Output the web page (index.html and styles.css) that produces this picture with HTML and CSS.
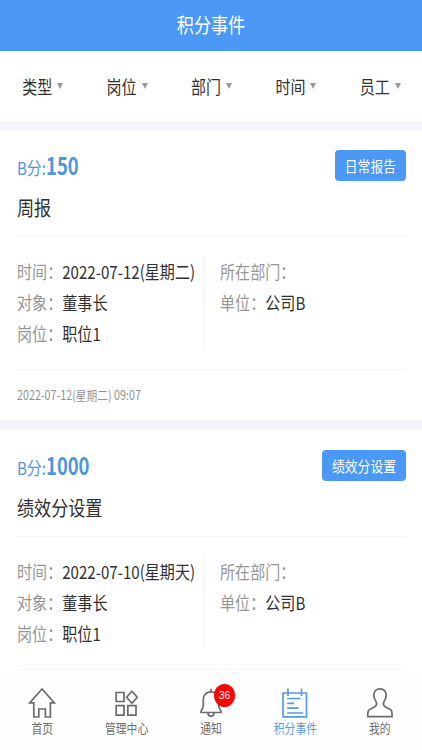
FILE: index.html
```html
<!DOCTYPE html>
<html lang="zh-CN">
<head>
<meta charset="utf-8">
<title>积分事件</title>
<link rel="stylesheet" href="styles.css">
</head>
<body>
<div class="app">
  <header class="title-bar"><span class="tall">积分事件</span></header>
  <nav class="filters">
    <div class="filter"><span class="tall">类型</span><i class="caret"></i></div>
    <div class="filter"><span class="tall">岗位</span><i class="caret"></i></div>
    <div class="filter"><span class="tall">部门</span><i class="caret"></i></div>
    <div class="filter"><span class="tall">时间</span><i class="caret"></i></div>
    <div class="filter"><span class="tall">员工</span><i class="caret"></i></div>
  </nav>
  <main class="list">
    <article class="card">
      <div class="card-head">
        <div>
          <div class="score"><span class="tall">B分:<b>150</b></span></div>
          <div class="name"><span class="tall">周报</span></div>
        </div>
        <span class="tag"><span class="tall">日常报告</span></span>
      </div>
      <div class="details">
        <div class="col">
          <div class="row"><span class="tall"><span class="label">时间：</span>2022-07-12(星期二)</span></div>
          <div class="row"><span class="tall"><span class="label">对象：</span>董事长</span></div>
          <div class="row"><span class="tall"><span class="label">岗位：</span>职位1</span></div>
        </div>
        <div class="col">
          <div class="row"><span class="tall"><span class="label">所在部门：</span></span></div>
          <div class="row"><span class="tall"><span class="label">单位：</span>公司B</span></div>
        </div>
      </div>
      <div class="stamp"><span class="tall">2022-07-12(星期二) 09:07</span></div>
    </article>
    <article class="card">
      <div class="card-head">
        <div>
          <div class="score"><span class="tall">B分:<b>1000</b></span></div>
          <div class="name"><span class="tall">绩效分设置</span></div>
        </div>
        <span class="tag"><span class="tall">绩效分设置</span></span>
      </div>
      <div class="details">
        <div class="col">
          <div class="row"><span class="tall"><span class="label">时间：</span>2022-07-10(星期天)</span></div>
          <div class="row"><span class="tall"><span class="label">对象：</span>董事长</span></div>
          <div class="row"><span class="tall"><span class="label">岗位：</span>职位1</span></div>
        </div>
        <div class="col">
          <div class="row"><span class="tall"><span class="label">所在部门：</span></span></div>
          <div class="row"><span class="tall"><span class="label">单位：</span>公司B</span></div>
        </div>
      </div>
    </article>
  </main>
  <footer class="tabs">
    <div class="tab">
      <svg class="icon" viewBox="0 0 28 32"><path d="M14 2 1.800 15.800H5.800V30H10.800V22H17.400V30H22.400V15.800H26.200Z"/></svg>
      <span class="tall">首页</span>
    </div>
    <div class="tab">
      <svg class="icon" viewBox="0 0 28 32"><path d="M3.200 5.500H11V14.500H3.200ZM3.200 18.600H11V28.200H3.200ZM14.800 18.600H23V28.200H14.800ZM18.900 4.300 24.200 10.300 18.900 16.300 13.600 10.300Z"/></svg>
      <span class="tall">管理中心</span>
    </div>
    <div class="tab">
      <div class="bell">
        <svg class="icon" viewBox="0 0 28 32"><path d="M14 1.800V5M4 25.500H24C24.500 22.800 21.800 22.500 21.700 18.500V12.500C21.700 7.500 18.500 4.800 14 4.800S6.300 7.500 6.300 12.500V18.500C6.200 22.500 3.500 22.800 4 25.500ZM11 26C11 30.200 17 30.200 17 26"/></svg>
        <span class="count">36</span>
      </div>
      <span class="tall">通知</span>
    </div>
    <div class="tab active">
      <svg class="icon" viewBox="0 0 28 32"><path d="M2 6H25.500V29.800H2ZM7 1.500V9M20.500 1.500V9M6.200 11.500H19.500M6.200 16.300H13M6.200 21.200H17.500M6.200 26H22"/></svg>
      <span class="tall">积分事件</span>
    </div>
    <div class="tab">
      <svg class="icon" viewBox="0 0 28 32"><path d="M14 1.800C10 1.800 7.800 4.600 7.800 8.200C7.800 11.800 9.700 13.500 10.400 15.500C11.200 18 10 19.300 7.500 20.500L4.500 22C2 23.300 1.700 24.500 1.700 29.700H26.100C26.100 24.500 26 23.300 23.500 22L20.500 20.500C18 19.300 16.800 18 17.600 15.500C18.300 13.500 20.200 11.800 20.200 8.200C20.200 4.600 18 1.800 14 1.800Z"/></svg>
      <span class="tall">我的</span>
    </div>
  </footer>
</div>
</body>
</html>
```
FILE: styles.css
```css
* { box-sizing: border-box; }

body {
  margin: 0;
  background: #f5f6fb;
  color: #303030;
  font-family: "Noto Sans CJK SC", sans-serif;
  font-size: 15px;
}

.app {
  display: flex;
  flex-direction: column;
  width: 422px;
  height: 750px;
  overflow: hidden;
}

.tall {
  display: inline-block;
  transform: scaleY(1.18);
  white-space: nowrap;
}

.title-bar {
  flex: none;
  height: 51px;
  line-height: 49px;
  background: #4c98f5;
  color: #fff;
  font-size: 17.1px;
  text-align: center;
}

.filters {
  flex: none;
  display: grid;
  grid-template-columns: repeat(5, 1fr);
  height: 70px;
  margin-bottom: 9px;
  background: #fff;
}

.filter {
  display: flex;
  align-items: center;
  justify-content: center;
  gap: 5px;
  padding-left: 1px;
}

.caret {
  border: 3.5px solid transparent;
  border-top: 6px solid #999;
  border-bottom: 0;
}

.list {
  flex: 1;
  min-height: 0;
  overflow: hidden;
}

.card {
  height: 290px;
  margin-bottom: 10px;
  padding: 0 16px 0 17px;
  background: #fff;
}

.card-head {
  display: flex;
  justify-content: space-between;
  align-items: flex-start;
  height: 107px;
  padding-top: 20px;
  border-bottom: 1px solid #f5f5f5;
}

.score {
  height: 36px;
  line-height: 33px;
  color: #4f94de;
}

.score b {
  display: inline-block;
  font-size: 18.4px;
  transform: scaleY(1.09);
  transform-origin: 50% 70%;
}

.name {
  line-height: 43px;
  font-size: 17.1px;
}

.tag {
  height: 31px;
  padding: 0 10px;
  border-radius: 4px;
  background: #4c98f5;
  color: #fff;
  font-size: 12.8px;
  line-height: 31px;
}

.details {
  display: grid;
  grid-template-columns: 186px 1fr;
  height: 133px;
  padding: 19px 0 20px;
  border-bottom: 1px solid #f5f5f5;
}

.col + .col {
  padding-left: 16px;
  border-left: 1px solid #f5f5f5;
}

.row {
  height: 31px;
  line-height: 31px;
  font-size: 15.08px;
}

.label { color: #969696; }

.stamp {
  line-height: 50px;
  color: #929292;
  font-size: 10.75px;
}

.tabs {
  flex: none;
  display: grid;
  grid-template-columns: repeat(5, 1fr);
  height: 77px;
  padding-top: 14px;
  background: linear-gradient(#f5f5f5, #f5f5f5) 17px 0 / 390px 1px no-repeat #fefefe;
}

.tab {
  display: flex;
  flex-direction: column;
  align-items: center;
  color: #6c6c6c;
  font-size: 10.8px;
  line-height: 16px;
}

.tab.active { color: #569be8; }

.icon {
  display: block;
  width: 28px;
  height: 32px;
  fill: none;
  stroke: currentColor;
  stroke-width: 1.7;
}

.bell { position: relative; }

.count {
  position: absolute;
  left: 17px;
  top: -3px;
  width: 21px;
  height: 23px;
  border-radius: 50%;
  background: #f80505;
  color: #fff;
  font: 10.5px/23px "Liberation Sans", sans-serif;
  text-align: center;
}
```
